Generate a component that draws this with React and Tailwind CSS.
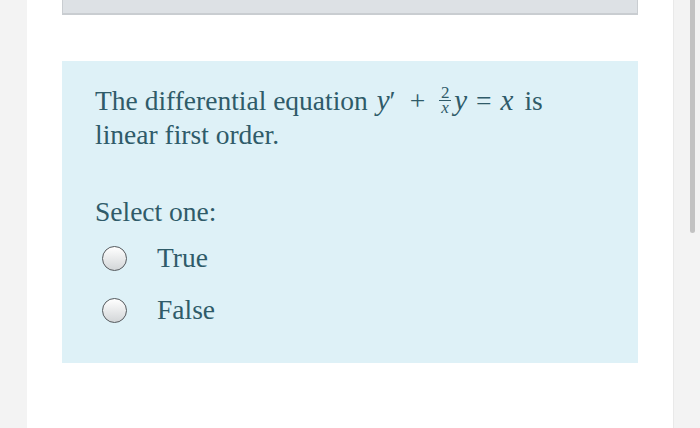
import React from 'react'

const Radio = ({ label }) => (
  <label className="flex items-center h-[34px] cursor-pointer">
    <span className="ml-[7px] w-[25px] h-[25px] rounded-full border-[1.5px] border-[#55595d] bg-gradient-to-b from-white to-[#d3d6d8] shrink-0" />
    <span className="ml-[30px]">{label}</span>
  </label>
)

// small stacked 2/x fraction
const Fraction = () => (
  <span className="relative -top-[3px] inline-flex flex-col items-center align-middle mx-[1px] text-[17px] leading-[14px]">
    <span>2</span>
    <span className="w-[12px] border-t border-[#2f5b69]" />
    <span className="italic">x</span>
  </span>
)

export default function App() {
  return (
    <div
      className="flex h-[428px] w-[700px] overflow-hidden bg-[#f3f3f3] text-[#2f5b69]"
      style={{ fontFamily: '"Liberation Serif", "Times New Roman", serif' }}
    >
      {/* left gutter */}
      <div className="w-[27px] shrink-0 bg-[#f3f3f3]" />

      {/* page column */}
      <div className="w-[646px] shrink-0 bg-white px-[35px]">
        <div className="h-[15px] bg-[#dde1e5] border-x border-b-2 border-[#c9cdd1]" />

        <div className="mt-[46px] h-[302px] bg-[#def1f7] pl-[33px] pr-[20px] pt-[22px] text-[27.5px] leading-[34px]">
          <p>
            The differential equation{' '}
            <span className="italic text-[29px] ml-[2px]">y</span>′
            <span className="ml-[14px] mr-[13px]">+</span>
            <Fraction />
            <span className="italic text-[29px] ml-[2px]">y</span>
            <span className="mx-[9px]">=</span>
            <span className="italic text-[29px]">x</span>
            <span className="ml-[11px]">is</span>
            <br />
            linear first order.
          </p>

          <p className="mt-[43px]">Select one:</p>

          <div className="mt-[12px] flex flex-col gap-[18px]">
            <Radio label="True" />
            <Radio label="False" />
          </div>
        </div>
      </div>

      {/* scrollbar strip */}
      <div className="flex-1 border-l border-[#e9e9e9] bg-[#f3f3f3] pl-[16px]">
        <div className="w-[5px] h-[233px] rounded-b-[3px] bg-[#c2c2c2]" />
      </div>
    </div>
  )
}
